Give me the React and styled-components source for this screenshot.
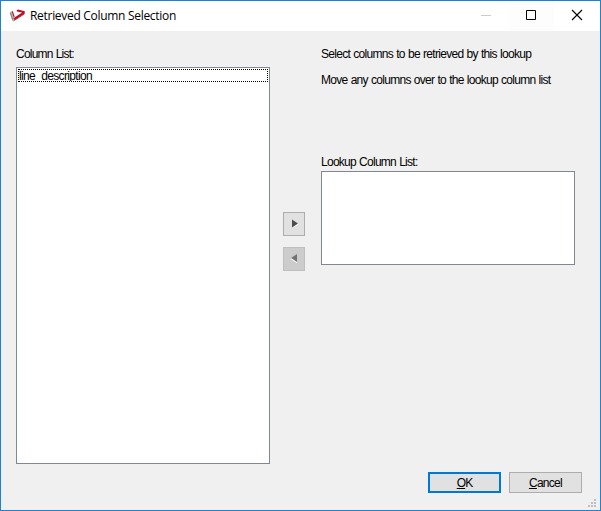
import React from "react";
import styled, { createGlobalStyle } from "styled-components";

const GlobalStyle = createGlobalStyle`
  *, *::before, *::after { box-sizing: border-box; }
  html, body { margin: 0; padding: 0; overflow: hidden; }
`;

const Window = styled.div`
  display: flex;
  flex-direction: column;
  width: 601px;
  height: 511px;
  border: 1px solid #1883d7;
  background: #f0f0f0;
  color: #000;
  font: 12px/14px "Liberation Sans", Arial, sans-serif;
  word-spacing: 0.5px;
`;

const TitleBar = styled.header`
  display: flex;
  align-items: center;
  height: 30px;
  padding-left: 8px;
  background: #fff;
`;

const Title = styled.h1`
  flex: 1;
  margin: 0 0 0 5px;
  font: 400 12px/16px "Open Sans", "Noto Sans", sans-serif;
  letter-spacing: ${(p) => p.$tracking}px;
  word-spacing: 0;
  white-space: nowrap;
`;

const CaptionButton = styled.button`
  display: flex;
  width: ${(p) => p.$width}px;
  height: 30px;
  padding: 0;
  border: 0;
  background: ${(p) => (p.$tinted ? "#fdfdfd" : "transparent")};
`;

const Body = styled.main`
  display: grid;
  grid-template-columns: 254px 51px 254px;
  height: 433px;
  padding: 16px 0 0 15px;
`;

const Column = styled.section`
  display: flex;
  flex-direction: column;
`;

const Label = styled.div`
  height: 14px;
  margin-bottom: ${(p) => p.$gap}px;
  letter-spacing: ${(p) => p.$tracking}px;
  white-space: nowrap;
`;

const ListBox = styled.ul`
  height: ${(p) => p.$height}px;
  margin: 0;
  padding: 1px;
  border: 1px solid #828790;
  background: #fff;
  list-style: none;
`;

const ListItem = styled.li`
  height: 13px;
  overflow: hidden;
  border: 1px dotted #000;
  line-height: 13px;
  letter-spacing: ${(p) => p.$tracking}px;
`;

const Movers = styled.div`
  display: flex;
  flex-direction: column;
  align-items: flex-start;
  gap: 11px;
  padding: 165px 0 0 13px;
`;

const MoveButton = styled.button`
  display: flex;
  width: 22px;
  height: 24px;
  padding: 0;
  border: 1px solid ${(p) => (p.disabled ? "#bfbfbf" : "#adadad")};
  background: ${(p) => (p.disabled ? "#cccccc" : "#e1e1e1")};
`;

const Footer = styled.footer`
  display: flex;
  gap: 8px;
  height: 46px;
  padding: 8px 0 0 427px;
`;

const ActionButton = styled.button`
  width: 73px;
  height: 21px;
  padding: 2px 0 0;
  border: ${(p) => (p.$primary ? "2px solid #0078d7" : "1px solid #adadad")};
  background: #e1e1e1;
  color: #000;
  font: inherit;
  letter-spacing: ${(p) => p.$tracking}px;
  line-height: 15px;
  white-space: nowrap;
`;

const Mnemonic = styled.span`
  text-decoration: underline;
  text-underline-offset: 1px;
  text-decoration-thickness: 1px;
`;

const Grip = styled.svg`
  flex: none;
  align-self: flex-start;
  margin: 27px 0 0 -2px;
`;

function AppIcon() {
  return (
    <svg width="16" height="16" viewBox="0 0 16 16" aria-hidden="true">
      <path d="M0.8 4.5 2.6 3.2 5 9.8 4.6 13 3.4 12.6Z" fill="#b0b0b0" />
      <path d="M1.2 5 4 12.4" stroke="#777" strokeWidth=".8" />
      <path d="M3.2 3.2 5.2 9" stroke="#c60a20" strokeWidth="1.1" />
      <path d="M7.6 2.2 9 1.6 15.8 3.2 15.6 5.4 12.6 4.4 8 3.5Z" fill="#c60a20" />
      <path d="M15 4.6 5 11.1" stroke="#c60a20" strokeWidth="2.3" />
      <path d="M15.4 6 4.6 12.8" stroke="#8f1825" strokeWidth=".8" />
    </svg>
  );
}

function MoveGlyph({ left }) {
  return (
    <svg width="20" height="22" viewBox="0 0 20 22" aria-hidden="true">
      <path
        d={left ? "M13 6.5v8.5L6.5 11z" : "M8.5 7v8L15 11z"}
        fill="#fff"
      />
      <path
        d={left ? "M13 6v8L7 10z" : "M8 6.5v8L14 10.5z"}
        fill={left ? "#737373" : "#4d4d4d"}
      />
    </svg>
  );
}

const gripDots = [[6, 0], [3, 3], [6, 3], [0, 6], [3, 6], [6, 6]];

export default function App() {
  return (
    <>
      <GlobalStyle />
      <Window>
        <TitleBar>
          <AppIcon />
          <Title $tracking={-0.3}>Retrieved Column Selection</Title>
          <CaptionButton $width={45} aria-label="Minimize">
            <svg width="45" height="30"><path d="M17 14.5h10" stroke="#ccc" /></svg>
          </CaptionButton>
          <CaptionButton $width={45} $tinted aria-label="Maximize">
            <svg width="45" height="30"><path d="M17.5 9.5h9v9h-9z" fill="none" stroke="#000" /></svg>
          </CaptionButton>
          <CaptionButton $width={46} aria-label="Close">
            <svg width="46" height="30"><path d="M18 9l10 10M28 9L18 19" stroke="#000" strokeWidth="1.1" /></svg>
          </CaptionButton>
        </TitleBar>
        <Body>
          <Column>
            <Label $gap={6} $tracking={-0.78}>Column List:</Label>
            <ListBox $height={397}>
              <ListItem $tracking={-0.64}>line_description</ListItem>
            </ListBox>
          </Column>
          <Movers>
            <MoveButton aria-label="Add column"><MoveGlyph /></MoveButton>
            <MoveButton disabled aria-label="Remove column"><MoveGlyph left /></MoveButton>
          </Movers>
          <Column>
            <Label $gap={12} $tracking={-0.7}>Select columns to be retrieved by this lookup</Label>
            <Label $gap={68} $tracking={-0.71}>Move any columns over to the lookup column list</Label>
            <Label $gap={2} $tracking={-0.73}>Lookup Column List:</Label>
            <ListBox $height={94} />
          </Column>
        </Body>
        <Footer>
          <ActionButton $primary $tracking={-0.9}><Mnemonic>O</Mnemonic>K</ActionButton>
          <ActionButton $tracking={-0.7}><Mnemonic>C</Mnemonic>ancel</ActionButton>
          <Grip width="8" height="8" aria-hidden="true">
            {gripDots.map(([x, y]) => (
              <rect key={`${x}-${y}`} x={x} y={y} width="2" height="2" fill="#bfbfbf" />
            ))}
          </Grip>
        </Footer>
      </Window>
    </>
  );
}
